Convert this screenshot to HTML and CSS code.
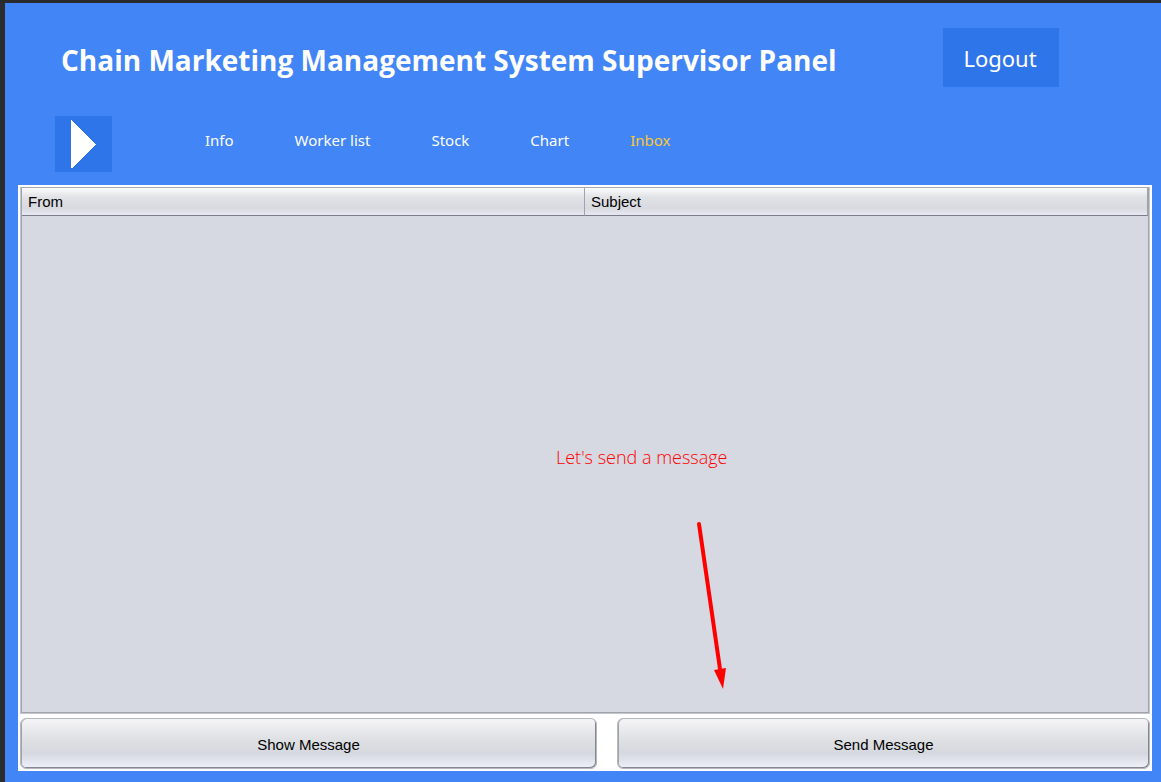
FILE: index.html
```html
<!DOCTYPE html>
<html lang="en">
<head>
<meta charset="utf-8">
<title>Supervisor Panel</title>
<link rel="stylesheet" href="styles.css">
</head>
<body>
<div class="app">
  <header class="header">
    <h1 class="title">Chain Marketing Management System Supervisor Panel</h1>
    <button class="logout" type="button">Logout</button>
  </header>
  <div class="toolbar">
    <button class="play" type="button" aria-label="Open menu">
      <svg class="play-icon" viewBox="0 0 57 56" shape-rendering="crispEdges" aria-hidden="true"><path d="M16 4 L41 28.500 L16 53 Z" fill="#fff"/></svg>
    </button>
    <nav class="nav">
      <a class="nav-link" href="#info">Info</a>
      <a class="nav-link" href="#workers">Worker list</a>
      <a class="nav-link" href="#stock">Stock</a>
      <a class="nav-link" href="#chart">Chart</a>
      <a class="nav-link active" href="#inbox">Inbox</a>
    </nav>
  </div>
  <main class="panel">
    <div class="messages">
      <table class="table">
        <thead><tr><th scope="col">From</th><th scope="col">Subject</th></tr></thead>
      </table>
      <p class="note">Let's send a message</p>
      <svg class="arrow" viewBox="0 0 34 170" aria-hidden="true"><path d="M6 5 L27 150" stroke="#f00" stroke-width="4" stroke-linecap="round"/><path d="M21 151 L33 149 L30 170 Z" fill="#f00"/></svg>
    </div>
    <div class="actions">
      <button class="action" type="button">Show Message</button>
      <button class="action" type="button">Send Message</button>
    </div>
  </main>
</div>
</body>
</html>
```
FILE: styles.css
```css
* { box-sizing: border-box; }

body {
  margin: 0;
  background: #2a2c30;
  font-family: "Liberation Sans", Arial, sans-serif;
}

.app {
  display: flex;
  flex-direction: column;
  min-height: 100vh;
  padding: 25px 9px 11px 13px;
  border-top: 3px solid #282a2d;
  border-left: 5px solid #2a2c30;
  background: #4285f6;
}

.header {
  display: flex;
  align-items: center;
  justify-content: space-between;
  padding: 0 93px 0 43px;
}

.title {
  margin: 0;
  padding-top: 5px;
  color: #fff;
  font: bold 28px/40px "Open Sans", "Noto Sans", sans-serif;
  white-space: nowrap;
}

.logout {
  width: 116px;
  height: 59px;
  padding: 0 2px 0 0;
  border: 0;
  background: #2f75ea;
  color: #fff;
  font: 22px/30px "Noto Sans", sans-serif;
}

.toolbar {
  display: flex;
  margin-top: 29px;
  padding-left: 37px;
}

.play {
  display: block;
  width: 57px;
  height: 56px;
  padding: 0;
  border: 0;
  background: #2f75ea;
}

.play-icon {
  display: block;
  width: 100%;
  height: 100%;
}

.nav {
  display: flex;
  gap: 61px;
  padding: 13px 0 0 93px;
}

.nav-link {
  color: #fff;
  font: 15px/22px "Noto Sans", sans-serif;
  text-decoration: none;
  white-space: nowrap;
}

.nav-link.active { color: #fac832; }

.panel {
  display: flex;
  flex: 1;
  flex-direction: column;
  margin-top: 13px;
  padding: 2px;
  background: #fff;
}

.messages {
  position: relative;
  flex: 1;
  border: 1px solid #c4c7ce;
  border-top-color: #a9abb0;
  box-shadow: inset 1px 0 #a0a3ab, inset -1px -1px #a0a3ab;
  padding: 0 1px 1px;
  background: #d6d9e1;
}

.table {
  width: 100%;
  table-layout: fixed;
  border-collapse: separate;
  border-spacing: 0;
}

.table th {
  height: 28px;
  padding: 0 6px;
  border-right: 1px solid #a0a3ab;
  border-bottom: 1px solid #7b7c87;
  background: linear-gradient(#fbfbfc, #e1e2e6 35%, #d8dae0 75%, #e6e9f2);
  font-size: 15px;
  font-weight: normal;
  text-align: left;
}

.note {
  position: absolute;
  top: 49%;
  left: 535px;
  margin: 0;
  color: #f00;
  font: 300 18px/24px "Open Sans", "Noto Sans", sans-serif;
  white-space: nowrap;
}

.arrow {
  position: absolute;
  right: 422px;
  bottom: 24px;
  width: 34px;
  height: 170px;
  fill: none;
}

.actions {
  display: grid;
  grid-template-columns: 577fr 533fr;
  gap: 20px;
  margin-top: 4px;
}

.action {
  height: 51px;
  padding: 2px 0 0;
  border: 1px solid #b5b8bc;
  border-radius: 6px;
  box-shadow: inset 1px 0 #a0a3a8, inset -1px -1px #85878d;
  background: linear-gradient(#f5f5f7, #e0e1e4 40%, #d5d8df 70%, #eef1fa);
  color: #000;
  font: 15px/20px "Liberation Sans", Arial, sans-serif;
}
```
